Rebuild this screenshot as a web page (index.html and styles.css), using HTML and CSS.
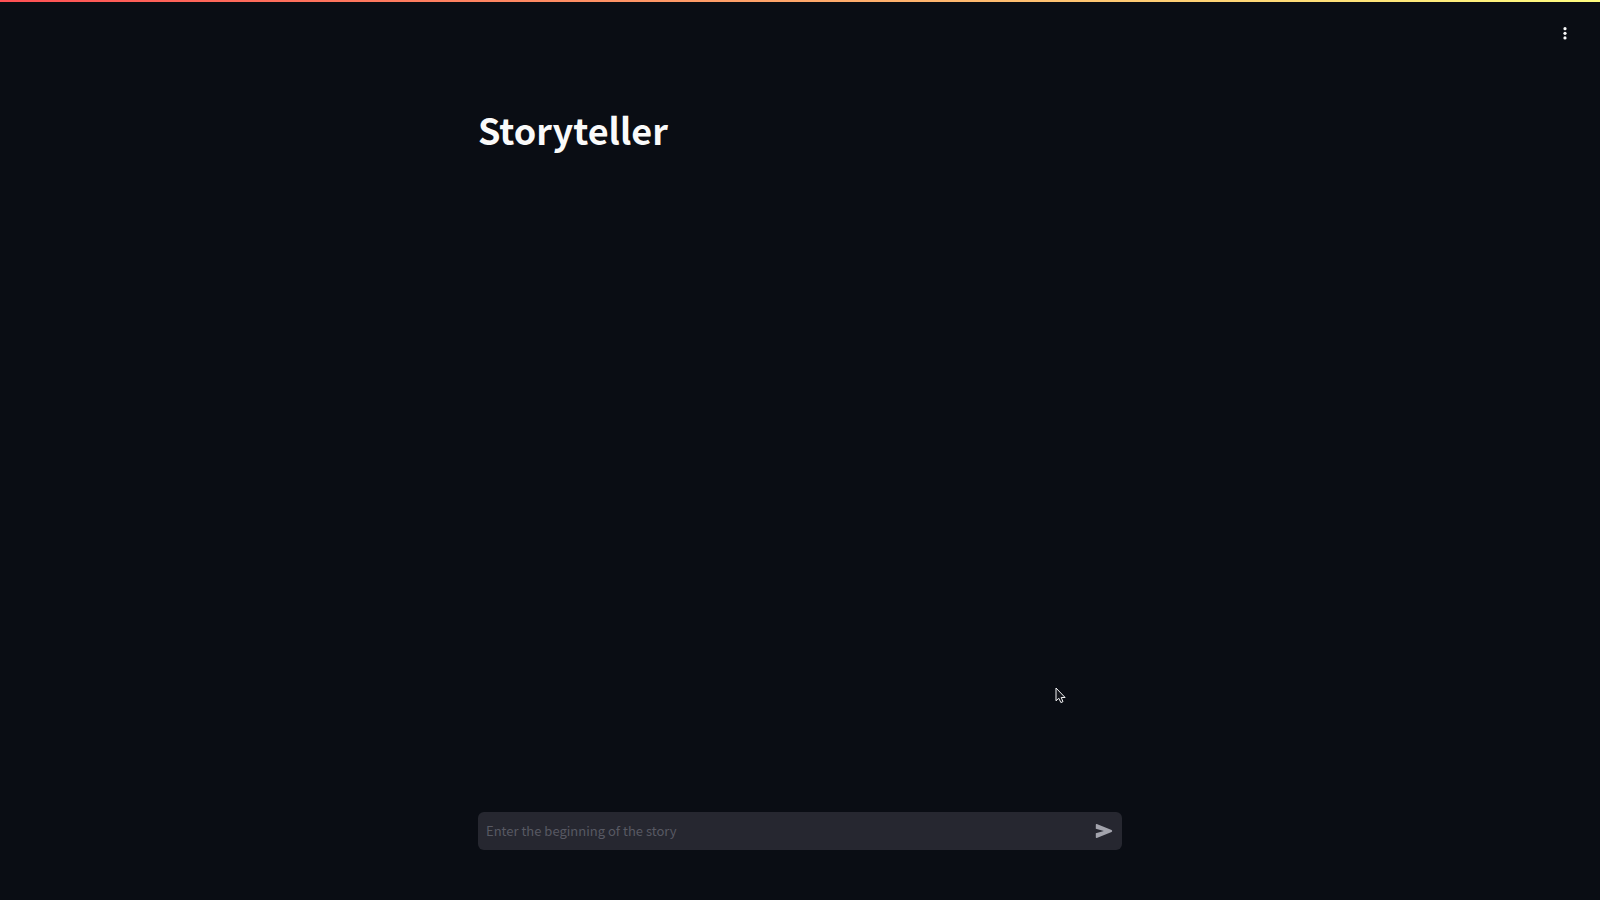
FILE: index.html
```
<!DOCTYPE html>
<html lang="en">
<head>
<meta charset="utf-8">
<meta name="viewport" content="width=device-width, initial-scale=1">
<title>Storyteller</title>
<link rel="stylesheet" href="styles.css">
</head>
<body>
<div class="decoration"></div>
<header class="header">
  <button class="menu-button" type="button" aria-label="Main menu">
    <svg class="menu-icon" viewBox="0 0 16 16" aria-hidden="true"><circle cx="8" cy="3.7" r="1.6"/><circle cx="8" cy="8.3" r="1.6"/><circle cx="8" cy="12.9" r="1.6"/></svg>
  </button>
</header>
<main class="main">
  <h1 class="title">Storyteller</h1>
</main>
<footer class="footer">
  <form class="chat">
    <input class="chat-input" type="text" aria-label="Enter the beginning of the story" placeholder="Enter the beginning of the story">
    <button class="send-button" type="button" aria-label="Send">
      <svg class="send-icon" viewBox="0 0 18 16" aria-hidden="true"><path d="M1.8 1 16.6 7.1Q18 8 16.6 8.9L1.8 15Q.8 15.2.8 14.2V10.2L8.8 8 .8 5.8V1.8Q.8.8 1.8 1Z"/></svg>
    </button>
  </form>
</footer>
<svg class="cursor" viewBox="0 0 12 17" aria-hidden="true"><path d="M1 1V13.8L3.8 11.3 5.9 15.6 8 14.6 6.2 10.5H10.1Z"/></svg>
</body>
</html>
```
FILE: styles.css
```
* {
  box-sizing: border-box;
}

body {
  margin: 0;
  min-height: 100vh;
  display: flex;
  flex-direction: column;
  background: #0a0d14;
  color: #fafafa;
  font-family: "Source Sans Pro", "Noto Sans CJK JP", sans-serif;
}

.decoration {
  height: 2px;
  background: linear-gradient(90deg, #ff5054, #fffd80);
}

.header {
  display: flex;
  justify-content: flex-end;
  padding: 16px 20px;
}

.menu-button,
.send-button {
  display: flex;
  align-items: center;
  justify-content: center;
  padding: 0;
  border: 0;
  background: none;
}

.menu-button {
  width: 30px;
  height: 30px;
}

.menu-icon {
  width: 16px;
  height: 16px;
  fill: #fafafa;
}

.main,
.footer {
  width: 100%;
  max-width: 676px;
  margin: 0 auto;
  padding: 0 16px;
}

.main {
  flex: 1;
  padding-top: 40px;
}

.title {
  margin: 0;
  font-size: 36px;
  font-weight: 700;
  line-height: 50px;
}

.footer {
  padding-bottom: 50px;
}

.chat {
  display: flex;
  height: 38px;
  border-radius: 6px;
  background: #262730;
}

.chat-input {
  flex: 1;
  min-width: 0;
  padding: 0 8px 2px;
  border: 0;
  outline: 0;
  background: none;
  color: #fafafa;
  font-family: inherit;
  font-size: 13px;
}

.chat-input::placeholder {
  color: #585963;
  opacity: 1;
}

.send-button {
  width: 36px;
}

.send-icon {
  width: 18px;
  height: 16px;
  fill: #a3a4ad;
}

.cursor {
  position: absolute;
  left: 1055px;
  top: 687px;
  width: 12px;
  height: 17px;
  fill: #15171d;
  stroke: #f4f4f6;
  stroke-width: 1;
}
```
